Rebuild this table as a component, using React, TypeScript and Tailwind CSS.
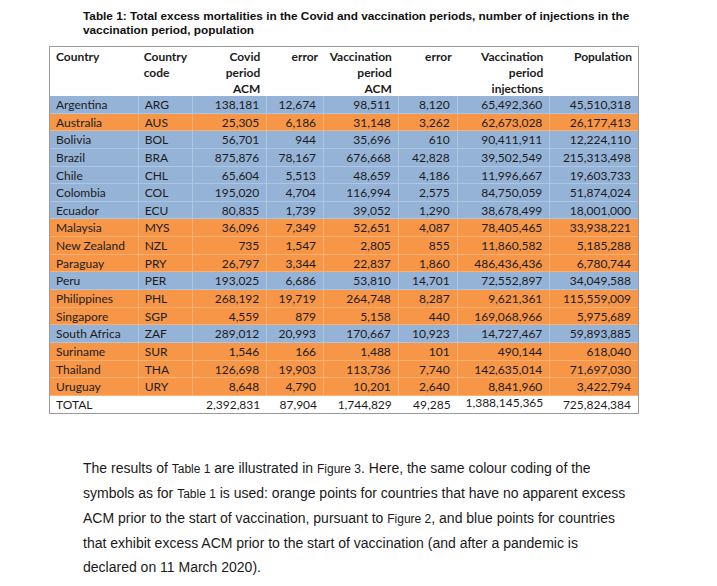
const rows: [string, string, string, string, string, string, string, string, "b" | "o"][] = [
  ["Argentina", "ARG", "138,181", "12,674", "98,511", "8,120", "65,492,360", "45,510,318", "b"],
  ["Australia", "AUS", "25,305", "6,186", "31,148", "3,262", "62,673,028", "26,177,413", "o"],
  ["Bolivia", "BOL", "56,701", "944", "35,696", "610", "90,411,911", "12,224,110", "b"],
  ["Brazil", "BRA", "875,876", "78,167", "676,668", "42,828", "39,502,549", "215,313,498", "b"],
  ["Chile", "CHL", "65,604", "5,513", "48,659", "4,186", "11,996,667", "19,603,733", "b"],
  ["Colombia", "COL", "195,020", "4,704", "116,994", "2,575", "84,750,059", "51,874,024", "b"],
  ["Ecuador", "ECU", "80,835", "1,739", "39,052", "1,290", "38,678,499", "18,001,000", "b"],
  ["Malaysia", "MYS", "36,096", "7,349", "52,651", "4,087", "78,405,465", "33,938,221", "o"],
  ["New Zealand", "NZL", "735", "1,547", "2,805", "855", "11,860,582", "5,185,288", "o"],
  ["Paraguay", "PRY", "26,797", "3,344", "22,837", "1,860", "486,436,436", "6,780,744", "o"],
  ["Peru", "PER", "193,025", "6,686", "53,810", "14,701", "72,552,897", "34,049,588", "b"],
  ["Philippines", "PHL", "268,192", "19,719", "264,748", "8,287", "9,621,361", "115,559,009", "o"],
  ["Singapore", "SGP", "4,559", "879", "5,158", "440", "169,068,966", "5,975,689", "o"],
  ["South Africa", "ZAF", "289,012", "20,993", "170,667", "10,923", "14,727,467", "59,893,885", "b"],
  ["Suriname", "SUR", "1,546", "166", "1,488", "101", "490,144", "618,040", "o"],
  ["Thailand", "THA", "126,698", "19,903", "113,736", "7,740", "142,635,014", "71,697,030", "o"],
  ["Uruguay", "URY", "8,648", "4,790", "10,201", "2,640", "8,841,960", "3,422,794", "o"],
];

const widths = ["w-[89px]", "w-[54px]", "w-[75px]", "w-[57px]", "w-[75px]", "w-[59px]", "w-[93px]", "w-[88px]"];

function Small({ children }: { children: React.ReactNode }) {
  return <span className="text-[12px]">{children}</span>;
}

export default function App() {
  return (
    <div className="w-[717px] h-[586px] bg-white overflow-hidden">
      <div className="pl-[83px] pt-[9px] font-['Liberation_Sans',Arial,sans-serif] font-bold text-[11.8px] leading-[14px] text-[#111] whitespace-nowrap">
        Table 1: Total excess mortalities in the Covid and vaccination periods, number of injections in the
        <br />
        vaccination period, population
      </div>

      <div className="ml-[49px] mt-[9px] w-[590px] border border-[#9a9a9a] font-['Lato',sans-serif] text-[12px] text-[#1c1c1c]">
        <div className="flex h-[49px] bg-white font-bold leading-[16px] pt-[2px]">
          <div className={`${widths[0]} pl-[6px]`}>Country</div>
          <div className={`${widths[1]} pl-[5px]`}>Country<br />code</div>
          <div className={`${widths[2]} pr-[7px] text-right`}>Covid<br />period<br />ACM</div>
          <div className={`${widths[3]} pr-[6px] text-right`}>error</div>
          <div className={`${widths[4]} pr-[7px] text-right`}>Vaccination<br />period<br />ACM</div>
          <div className={`${widths[5]} pr-[6px] text-right`}>error</div>
          <div className={`${widths[6]} pr-[7px] text-right`}>Vaccination<br />period<br />injections</div>
          <div className={`${widths[7]} pr-[6px] text-right`}>Population</div>
        </div>

        {rows.map((r) => (
          <div
            key={r[1]}
            className={`flex h-[17.65px] leading-[17px] ${r[8] === "b" ? "bg-[#95b3d7]" : "bg-[#f79646]"}`}
          >
            {r.slice(0, 8).map((c, i) => (
              <div
                key={i}
                className={`${widths[i]} ${i < 2 ? "text-left pl-[6px]" : "text-right pr-[7px]"} ${i < 7 ? "border-r border-white/25" : ""} border-b border-white/25 whitespace-nowrap`}
              >
                {c}
              </div>
            ))}
          </div>
        ))}

        <div className="flex h-[17px] leading-[17px] bg-white">
          <div className={`${widths[0]} pl-[6px]`}>TOTAL</div>
          <div className={widths[1]} />
          <div className={`${widths[2]} pr-[7px] text-right`}>2,392,831</div>
          <div className={`${widths[3]} pr-[7px] text-right`}>87,904</div>
          <div className={`${widths[4]} pr-[7px] text-right`}>1,744,829</div>
          <div className={`${widths[5]} pr-[7px] text-right`}>49,285</div>
          <div className={`${widths[6]} pr-[7px] text-right leading-[14px]`}>1,388,145,365</div>
          <div className={`${widths[7]} pr-[7px] text-right`}>725,824,384</div>
        </div>
      </div>

      <p className="pl-[83px] pt-[42px] font-['Liberation_Sans',Arial,sans-serif] text-[14px] leading-[24px] text-[#1a1a1a] whitespace-nowrap">
        The results of <Small>Table 1</Small> are illustrated in <Small>Figure 3</Small>. Here, the same colour coding of the
        <br />
        symbols as for <Small>Table 1</Small> is used: orange points for countries that have no apparent excess
        <br />
        ACM prior to the start of vaccination, pursuant to <Small>Figure 2</Small>, and blue points for countries
        <br />
        that exhibit excess ACM prior to the start of vaccination (and after a pandemic is
        <br />
        declared on 11 March 2020).
      </p>
    </div>
  );
}
